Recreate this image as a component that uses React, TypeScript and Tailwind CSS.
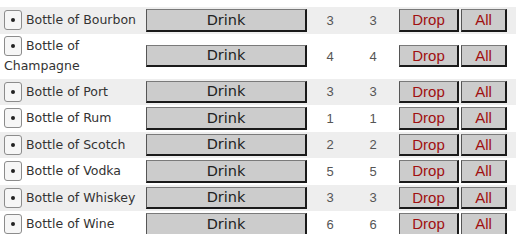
import React from 'react';

type Bottle = { name: string; have: number; total: number };

const bottles: Bottle[] = [
  { name: 'Bottle of Bourbon', have: 3, total: 3 },
  { name: 'Bottle of Champagne', have: 4, total: 4 },
  { name: 'Bottle of Port', have: 3, total: 3 },
  { name: 'Bottle of Rum', have: 1, total: 1 },
  { name: 'Bottle of Scotch', have: 2, total: 2 },
  { name: 'Bottle of Vodka', have: 5, total: 5 },
  { name: 'Bottle of Whiskey', have: 3, total: 3 },
  { name: 'Bottle of Wine', have: 6, total: 6 },
];

const btn =
  'block h-[22.5px] bg-[#cccccc] border-t border-l border-t-[#7a7a7a] border-l-[#555] border-b-2 border-r-2 border-b-[#1a1a1a] border-r-[#1a1a1a] leading-none';

const Row: React.FC<{ item: Bottle; shaded: boolean }> = ({ item, shaded }) => (
  <div className={`flex items-center py-[2px] ${shaded ? 'bg-[#eeeeee]' : 'bg-white'}`}>
    <div className="w-[144px] pl-[4px] text-[12.5px] leading-[20.5px] text-[#333] font-['DejaVu_Sans',sans-serif]">
      <button className="float-left mr-[4px] w-[18px] h-[20px] rounded-[3px] border border-[#8c8c8c] bg-[#f6f6f6] flex items-center justify-center">
        <span className="block w-[4px] h-[4px] rounded-full bg-[#222]" />
      </button>
      {item.name}
    </div>
    <div className="flex w-[165px] px-[2px]">
      <button className={`${btn} w-full text-[14.5px] text-[#222] font-['DejaVu_Sans',sans-serif]`}>Drink</button>
    </div>
    <div className="w-[42px] text-center text-[13px] leading-none text-[#555] font-['Liberation_Sans',sans-serif]">{item.have}</div>
    <div className="w-[44px] text-center text-[13px] leading-none text-[#555] font-['Liberation_Sans',sans-serif]">{item.total}</div>
    <div className="flex w-[64px] pl-[4px]">
      <button className={`${btn} w-[60px] text-[15px] text-[#a01010] font-['Liberation_Sans',sans-serif]`}>Drop</button>
    </div>
    <div className="flex pl-[2px]">
      <button className={`${btn} w-[46px] text-[15px] text-[#a01010] font-['Liberation_Sans',sans-serif]`}>All</button>
    </div>
  </div>
);

export default function App() {
  return (
    <div className="w-[516px] h-[234px] overflow-hidden bg-white pt-[7px]">
      {bottles.map((b, i) => (
        <Row key={b.name} item={b} shaded={i % 2 === 0} />
      ))}
    </div>
  );
}
